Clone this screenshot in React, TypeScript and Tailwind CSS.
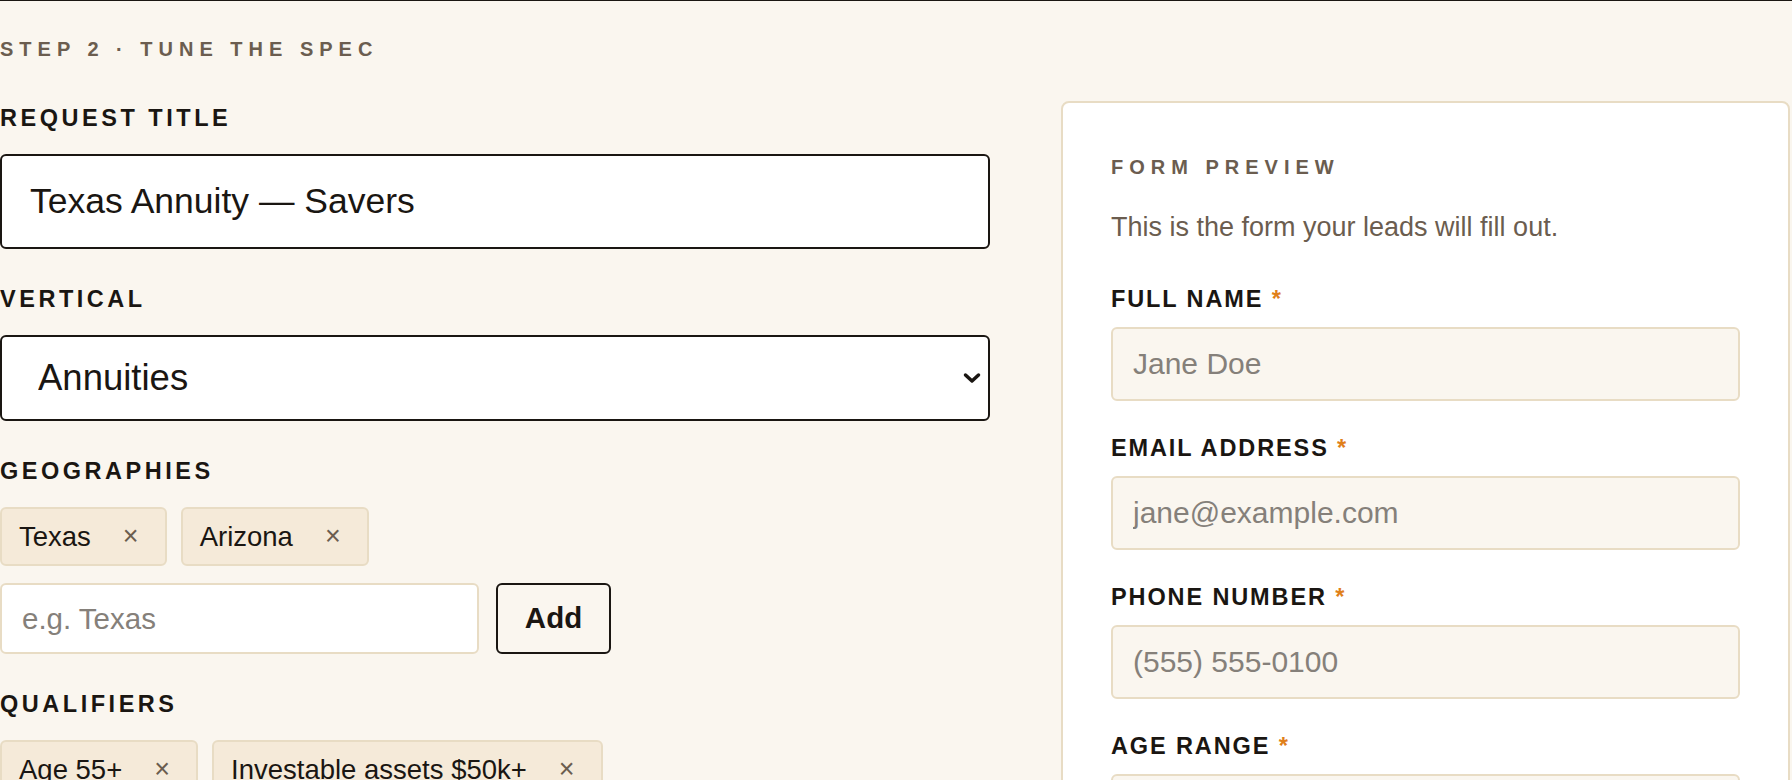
import { useState } from "react";

type Chip = { id: string; label: string };

const initialGeos: Chip[] = [
  { id: "tx", label: "Texas" },
  { id: "az", label: "Arizona" },
];

const initialQualifiers: Chip[] = [
  { id: "age", label: "Age 55+" },
  { id: "assets", label: "Investable assets $50k+" },
];

const previewFields = [
  { id: "name", label: "Full name", placeholder: "Jane Doe" },
  { id: "email", label: "Email address", placeholder: "jane@example.com" },
  { id: "phone", label: "Phone number", placeholder: "(555) 555-0100" },
  { id: "age", label: "Age range", placeholder: "" },
];

function FieldLabel({ children }: { children: React.ReactNode }) {
  return (
    <div className="mb-[22px] text-[23.5px] font-bold uppercase leading-[28px] tracking-[0.15em] text-[#1a1612]">
      {children}
    </div>
  );
}

function ChipRow({ items, onRemove }: { items: Chip[]; onRemove: (id: string) => void }) {
  return (
    <div className="flex flex-wrap gap-[14px]">
      {items.map((chip) => (
        <div
          key={chip.id}
          className="flex h-[59px] items-center gap-[32px] rounded-md border-2 border-[#e8dcc4] bg-[#f5ead9] pl-[17px] pr-[26px] text-[27.5px] text-[#1a1612]"
        >
          <span>{chip.label}</span>
          <button
            type="button"
            onClick={() => onRemove(chip.id)}
            className="text-[27px] leading-none text-[#6b5d4f]"
            aria-label={`Remove ${chip.label}`}
          >
            ×
          </button>
        </div>
      ))}
    </div>
  );
}

export default function App() {
  const [title, setTitle] = useState("Texas Annuity — Savers");
  const [vertical, setVertical] = useState("annuities");
  const [geos, setGeos] = useState<Chip[]>(initialGeos);
  const [qualifiers, setQualifiers] = useState<Chip[]>(initialQualifiers);
  const [geoDraft, setGeoDraft] = useState("");

  const addGeo = () => {
    const value = geoDraft.trim();
    if (!value) return;
    setGeos((current) => [...current, { id: `${value}-${current.length}`, label: value }]);
    setGeoDraft("");
  };

  return (
    <div className="min-h-screen overflow-hidden border-t border-[#1a1612] bg-[#faf6ef] pt-[34px] font-['Liberation_Sans',Arial,sans-serif]">
      <div className="grid grid-cols-[990px_729px] items-start gap-x-[71px]">
        {/* editor column */}
        <div>
          <div className="mb-[41px] text-[20px] font-bold uppercase leading-[28px] tracking-[0.3em] text-[#6b5d4f]">
            Step 2 · Tune the spec
          </div>

          <div className="flex flex-col gap-[36px]">
            <div>
              <FieldLabel>Request title</FieldLabel>
              <input
                value={title}
                onChange={(e) => setTitle(e.target.value)}
                className="h-[95px] w-full rounded-md border-2 border-[#1a1612] bg-white px-[28px] text-[35.5px] text-[#1a1612] outline-none"
              />
            </div>

            <div>
              <FieldLabel>Vertical</FieldLabel>
              <div className="relative">
                <select
                  value={vertical}
                  onChange={(e) => setVertical(e.target.value)}
                  className="h-[86px] w-full appearance-none rounded-md border-2 border-[#1a1612] bg-white pl-[36px] text-[36.5px] text-[#1a1612] outline-none"
                >
                  <option value="annuities">Annuities</option>
                  <option value="medicare">Medicare</option>
                  <option value="life">Life insurance</option>
                </select>
                <svg
                  viewBox="0 0 18 11"
                  className="pointer-events-none absolute right-[9px] top-1/2 h-[11px] w-[18px] -translate-y-1/2"
                  fill="none"
                  stroke="#1a1612"
                  strokeWidth="3.5"
                  strokeLinecap="round"
                  strokeLinejoin="round"
                >
                  <polyline points="2.5,2.5 9,8.5 15.5,2.5" />
                </svg>
              </div>
            </div>

            <div>
              <FieldLabel>Geographies</FieldLabel>
              <div className="mb-[17px]">
                <ChipRow items={geos} onRemove={(id) => setGeos((c) => c.filter((g) => g.id !== id))} />
              </div>
              <div className="flex gap-[17px]">
                <input
                  value={geoDraft}
                  onChange={(e) => setGeoDraft(e.target.value)}
                  placeholder="e.g. Texas"
                  className="h-[71px] w-[479px] rounded-md border-2 border-[#e8dcc4] bg-white px-[20px] text-[29.5px] text-[#1a1612] outline-none placeholder:text-[#85807a]"
                />
                <button
                  type="button"
                  onClick={addGeo}
                  className="h-[71px] w-[115px] rounded-md border-2 border-[#1a1612] text-[29.5px] font-bold text-[#1a1612]"
                >
                  Add
                </button>
              </div>
            </div>

            <div>
              <FieldLabel>Qualifiers</FieldLabel>
              <ChipRow
                items={qualifiers}
                onRemove={(id) => setQualifiers((c) => c.filter((q) => q.id !== id))}
              />
            </div>
          </div>
        </div>

        {/* preview card */}
        <aside className="mt-[66px] rounded-lg border-2 border-[#e8dcc4] bg-white px-[48px] pb-[48px] pt-[50px]">
          <div className="mb-[28px] text-[20px] font-bold uppercase leading-[28px] tracking-[0.3em] text-[#6b5d4f]">
            Form preview
          </div>
          <p className="text-[27px] leading-[36px] text-[#6b5d4f]">This is the form your leads will fill out.</p>

          <div className="mt-[40px] flex flex-col gap-[33px]">
            {previewFields.map((field) => (
              <div key={field.id}>
                <div className="mb-[14px] text-[23.5px] font-bold uppercase leading-[28px] tracking-[0.08em] text-[#1a1612]">
                  {field.label} <span className="text-[#e0801a]">*</span>
                </div>
                <input
                  placeholder={field.placeholder}
                  className="h-[74px] w-full rounded-md border-2 border-[#e8dcc4] bg-[#faf6ef] px-[20px] text-[30px] text-[#1a1612] outline-none placeholder:text-[#85807a]"
                />
              </div>
            ))}
          </div>
        </aside>
      </div>
    </div>
  );
}
